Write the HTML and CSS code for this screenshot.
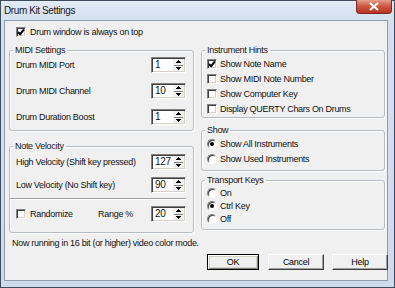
FILE: index.html
```html
<!DOCTYPE html>
<html lang="en">

<head>
    <meta charset="UTF-8">
    <title>Drum Kit Settings</title>
    <link rel="stylesheet" href="styles.css">
</head>

<body>
    <div class="window">
        <div class="titlebar">
            <span class="title">Drum Kit Settings</span>
            <span class="close">
                <svg width="12" height="9" viewBox="0 0 12 9"><path d="M2 1 L10 8 M10 1 L2 8" stroke="#fff" stroke-width="2.2" fill="none"/></svg>
            </span>
        </div>

        <div class="client">
            <label class="check topcheck"><span class="box on"></span>Drum window is always on top</label>

            <div class="columns">
                <div class="col">
                    <fieldset class="group midi">
                        <legend>MIDI Settings</legend>
                        <div class="row"><span>Drum MIDI Port</span><span class="spin"><span class="val">1</span><span class="arrows"></span></span></div>
                        <div class="row"><span>Drum MIDI Channel</span><span class="spin"><span class="val">10</span><span class="arrows"></span></span></div>
                        <div class="row"><span>Drum Duration Boost</span><span class="spin"><span class="val">1</span><span class="arrows"></span></span></div>
                    </fieldset>

                    <fieldset class="group velocity">
                        <legend>Note Velocity</legend>
                        <div class="row first"><span>High Velocity (Shift key pressed)</span><span class="spin"><span class="val">127</span><span class="arrows"></span></span></div>
                        <div class="row second"><span>Low Velocity (No Shift key)</span><span class="spin"><span class="val">90</span><span class="arrows"></span></span></div>
                        <div class="sep"></div>
                        <div class="row third">
                            <label class="check"><span class="box"></span>Randomize</label>
                            <span class="range">Range %<span class="spin"><span class="val">20</span><span class="arrows"></span></span></span>
                        </div>
                    </fieldset>

                    <p class="status">Now running in 16 bit (or higher) video color mode.</p>
                </div>

                <div class="col">
                    <fieldset class="group hints">
                        <legend>Instrument Hints</legend>
                        <label class="check opt"><span class="box on"></span>Show Note Name</label>
                        <label class="check opt"><span class="box"></span>Show MIDI Note Number</label>
                        <label class="check opt"><span class="box"></span>Show Computer Key</label>
                        <label class="check opt"><span class="box"></span>Display QUERTY Chars On Drums</label>
                    </fieldset>

                    <fieldset class="group show">
                        <legend>Show</legend>
                        <label class="check opt"><span class="radio on"></span>Show All Instruments</label>
                        <label class="check opt"><span class="radio"></span>Show Used Instruments</label>
                    </fieldset>

                    <fieldset class="group transport">
                        <legend>Transport Keys</legend>
                        <label class="check opt"><span class="radio"></span>On</label>
                        <label class="check opt"><span class="radio on"></span>Ctrl Key</label>
                        <label class="check opt"><span class="radio"></span>Off</label>
                    </fieldset>

                    <div class="buttons">
                        <button class="btn default">OK</button>
                        <button class="btn cancel">Cancel</button>
                        <button class="btn">Help</button>
                    </div>
                </div>
            </div>
        </div>
    </div>
</body>

</html>
```

FILE: styles.css
```css
body {
    margin: 0;
    padding: 0;
    font-family: "Liberation Sans", Arial, sans-serif;
    font-size: 9px;
    letter-spacing: -0.3px;
    color: #111;
}

.window {
    width: 395px;
    height: 288px;
    box-sizing: border-box;
    border: 1px solid #3e4c5e;
    background: linear-gradient(#e2ebf6, #d3e0ef 20px, #cddbed);
    display: flex;
    flex-direction: column;
}

.titlebar {
    height: 19px;
    position: relative;
}

.title {
    display: block;
    padding: 3px 0 0 3px;
    font-size: 10px;
    letter-spacing: -0.4px;
    line-height: 13px;
    color: #1a1a1a;
}

.close {
    position: absolute;
    top: -1px;
    right: 2px;
    width: 36px;
    height: 14px;
    box-sizing: border-box;
    border: 1px solid #7a2a22;
    border-top: none;
    border-radius: 0 0 4px 4px;
    background: linear-gradient(#e3a08f, #cf5b45 45%, #b8321f);
    display: flex;
    align-items: center;
    justify-content: center;
}

.client {
    flex: 1;
    margin: 0 6px 6px 3px;
    border: 1px solid #8d9db2;
    background: #f0f0f0;
    padding: 4px 0 0 4px;
}

.check {
    display: flex;
    align-items: center;
    gap: 4px;
    height: 14px;
    white-space: nowrap;
}

.topcheck {
    margin: 0 0 5px 7px;
}

.box {
    width: 10px;
    height: 10px;
    box-sizing: border-box;
    background: #fff;
    border: 1px solid;
    border-color: #808080 #fff #fff #808080;
    box-shadow: inset 1px 1px 0 #404040, inset -1px -1px 0 #d4d0c8;
    position: relative;
}

.box.on::after {
    content: "";
    position: absolute;
    left: 2px;
    top: 0px;
    width: 2px;
    height: 5px;
    border: solid #000;
    border-width: 0 2px 2px 0;
    transform: rotate(40deg);
}

.radio {
    width: 10px;
    height: 10px;
    box-sizing: border-box;
    border-radius: 50%;
    background: #fff;
    border: 1px solid;
    border-color: #808080 #fff #fff #808080;
    box-shadow: inset 1px 1px 0 #404040;
    display: flex;
    align-items: center;
    justify-content: center;
}

.radio.on::after {
    content: "";
    width: 4px;
    height: 4px;
    border-radius: 50%;
    background: #000;
}

.columns {
    display: grid;
    grid-template-columns: 185px 184px;
    column-gap: 7px;
}

.group {
    box-sizing: border-box;
    margin: 0;
    padding: 0;
    border: 1px solid #b6bcc4;
    border-radius: 3px;
    box-shadow: 1px 1px 0 #fff, inset 1px 1px 0 #fff;
    min-width: 0;
}

.group legend {
    margin-left: 3px;
    padding: 0 2px;
    line-height: 12px;
}

.row {
    display: flex;
    align-items: center;
    justify-content: space-between;
    height: 18px;
    padding: 0 7px 0 6px;
    white-space: nowrap;
}

.midi {
    height: 87px;
}

.midi .row + .row {
    margin-top: 8px;
}

.velocity {
    height: 93px;
    margin-top: 9px;
}

.velocity .first {
    margin-top: 1px;
}

.velocity .second {
    margin-top: 5px;
}

.sep {
    margin: 4px 7px 0 0;
    height: 1px;
    background: #a0a0a0;
    border-bottom: 1px solid #fff;
}

.velocity .third {
    margin-top: 5px;
}

.range {
    display: flex;
    align-items: center;
    gap: 18px;
}

.spin {
    display: flex;
    width: 35px;
    height: 16px;
    box-sizing: border-box;
    background: #fff;
    border: 1px solid;
    border-color: #808080 #fff #fff #808080;
    box-shadow: inset 1px 1px 0 #404040, inset -1px -1px 0 #d4d0c8;
}

.val {
    flex: 1;
    padding: 1px 0 0 3px;
    line-height: 12px;
    font-size: 10px;
}

.arrows {
    width: 11px;
    margin: 1px 1px 1px 0;
    background:
        linear-gradient(#000, #000) 3px 3px / 5px 1px no-repeat,
        linear-gradient(#000, #000) 4px 2px / 3px 1px no-repeat,
        linear-gradient(#000, #000) 5px 1px / 1px 1px no-repeat,
        linear-gradient(#000, #000) 3px 8px / 5px 1px no-repeat,
        linear-gradient(#000, #000) 4px 9px / 3px 1px no-repeat,
        linear-gradient(#000, #000) 5px 10px / 1px 1px no-repeat,
        linear-gradient(#808080, #808080) 1px 6px / 9px 1px no-repeat,
        #f0f0f0;
    border-left: 1px solid #fff;
}

.status {
    margin: 4px 0 0 3px;
    line-height: 12px;
    white-space: nowrap;
}

.opt {
    height: 15px;
    gap: 3px;
    padding-left: 5px;
}

.hints {
    height: 74px;
}

.show {
    height: 47px;
    margin-top: 6px;
}

.transport {
    height: 56px;
    margin-top: 3px;
}

.transport .opt {
    height: 13px;
}

.buttons {
    display: flex;
    margin: 24px 0 0 6px;
    width: 182px;
}

.btn {
    font: inherit;
    letter-spacing: -0.3px;
    height: 16px;
    width: 56px;
    padding: 0;
    margin: 0 8px 0 0;
    background: #f0f0f0;
    border: 1px solid;
    border-color: #fff #404040 #404040 #fff;
    box-shadow: inset -1px -1px 0 #a0a0a0;
    color: #000;
}

.btn.default {
    width: 52px;
    margin-right: 9px;
    outline: 1px solid #000;
    outline-offset: -1px;
    border-color: #000;
    box-shadow: inset 1px 1px 0 #fff, inset -1px -1px 0 #808080, inset 0 0 0 2px #d4d0c8;
}

.btn:last-child {
    margin-right: 0;
}
```
